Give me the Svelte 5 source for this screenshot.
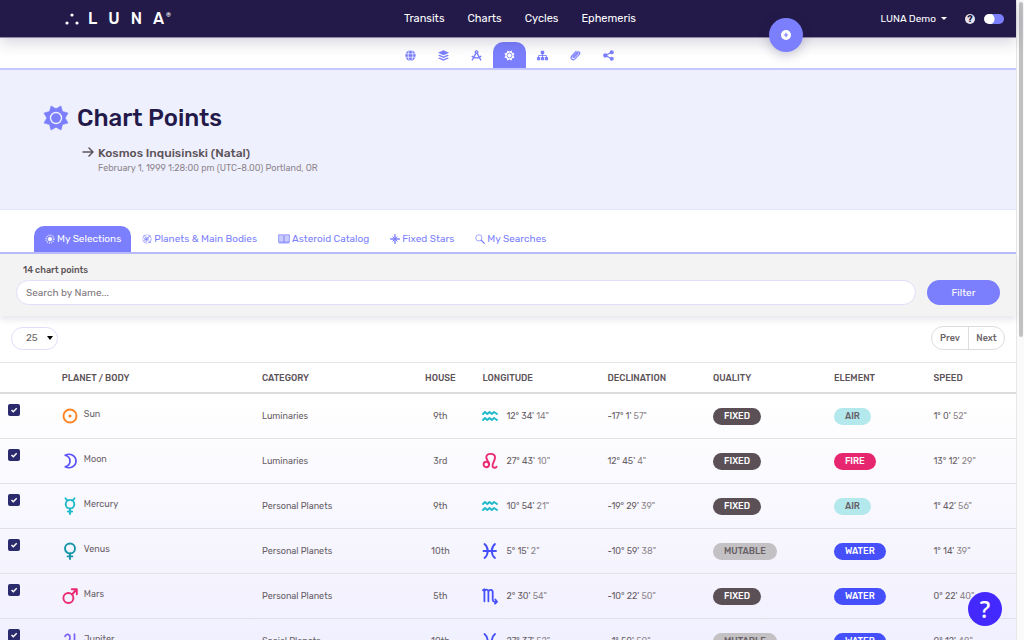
<script>
  const rows = [
    { body: 'Sun', icon: 'sun', color: '#fd8424', category: 'Luminaries', house: '9th', sign: 'aquarius', lon: ["12° 34'", '14"'], dec: ["-17° 1'", '57"'], quality: 'Fixed', element: 'Air', speed: ["1° 0'", '52"'] },
    { body: 'Moon', icon: 'moon', color: '#5a50f8', category: 'Luminaries', house: '3rd', sign: 'leo', lon: ["27° 43'", '10"'], dec: ["12° 45'", '4"'], quality: 'Fixed', element: 'Fire', speed: ["13° 12'", '29"'] },
    { body: 'Mercury', icon: 'mercury', color: '#1fb9c9', category: 'Personal Planets', house: '9th', sign: 'aquarius', lon: ["10° 54'", '21"'], dec: ["-19° 29'", '39"'], quality: 'Fixed', element: 'Air', speed: ["1° 42'", '56"'] },
    { body: 'Venus', icon: 'venus', color: '#1596a8', category: 'Personal Planets', house: '10th', sign: 'pisces', lon: ["5° 15'", '2"'], dec: ["-10° 59'", '38"'], quality: 'Mutable', element: 'Water', speed: ["1° 14'", '39"'] },
    { body: 'Mars', icon: 'mars', color: '#ea2a72', category: 'Personal Planets', house: '5th', sign: 'scorpio', lon: ["2° 30'", '54"'], dec: ["-10° 22'", '50"'], quality: 'Fixed', element: 'Water', speed: ["0° 22'", '40"'] },
    { body: 'Jupiter', icon: 'jupiter', color: '#7d62f8', category: 'Social Planets', house: '10th', sign: 'pisces', lon: ["27° 37'", '52"'], dec: ["-1° 50'", '50"'], quality: 'Mutable', element: 'Water', speed: ["0° 12'", '48"'] }
  ];
  const signColors = { aquarius: '#1fb9c9', leo: '#ea2a72', pisces: '#4550fa', scorpio: '#4550fa' };
  const tools = ['globe', 'layers', 'compass', 'points', 'tree', 'clip', 'share'];
  const toolNames = ['World', 'Layers', 'Draw', 'Chart points', 'Structure', 'Attachments', 'Share'];
  const tabs = [
    { name: 'My Selections', icon: 'rays' },
    { name: 'Planets & Main Bodies', icon: 'orbit' },
    { name: 'Asteroid Catalog', icon: 'book' },
    { name: 'Fixed Stars', icon: 'star' },
    { name: 'My Searches', icon: 'search' }
  ];
  const columns = ['Planet / Body', 'Category', 'House', 'Longitude', 'Declination', 'Quality', 'Element', 'Speed'];
  const sunPoints = (n, outer, inner, c) =>
    Array.from({ length: n * 2 }, (_, i) => {
      const r = i % 2 ? outer : inner;
      const a = (Math.PI * i) / n;
      return `${(c + r * Math.sin(a)).toFixed(2)},${(c - r * Math.cos(a)).toFixed(2)}`;
    }).join(' ');
</script>

{#snippet toolIcon(name)}
  <svg class="tool-icon" viewBox="0 0 16 16" fill="currentColor" aria-hidden="true">
    {#if name === 'globe'}
      <circle cx="8" cy="8" r="7.5" />
      <g fill="none" stroke="#fff" stroke-width="1"><ellipse cx="8" cy="8" rx="3.3" ry="7.5" /><path d="M.5 5.5h15M.5 10.5h15" /></g>
    {:else if name === 'layers'}
      <path d="M8 .5 16 4 8 7.7 0 4z" />
      <path d="m0 8 2.4-1.1L8 9.4l5.6-2.5L16 8l-8 3.7z" />
      <path d="m0 12 2.4-1.1L8 13.4l5.6-2.5L16 12l-8 3.7z" />
    {:else if name === 'compass'}
      <g fill="none" stroke="currentColor" stroke-width="2"><circle cx="8" cy="3" r="1.8" /><path d="M7.2 4.5 1.5 15M8.8 4.5 14.5 15M1 8.5c3.5 4 10.5 4 14 0" /></g>
    {:else if name === 'points'}
      <polygon points={sunPoints(8, 8, 5.8, 8)} />
      <circle cx="8" cy="8" r="3.5" fill="none" stroke="#7b7ffd" stroke-width="1.2" />
    {:else if name === 'tree'}
      <rect x="5.5" y="1" width="5" height="5" rx="1" /><rect x="0" y="10" width="4.6" height="5" rx="1" /><rect x="5.7" y="10" width="4.6" height="5" rx="1" /><rect x="11.4" y="10" width="4.6" height="5" rx="1" />
      <path d="M8 5v6M2.3 10.5V8h11.4v2.5" fill="none" stroke="currentColor" stroke-width="1.3" />
    {:else if name === 'clip'}
      <path d="M11.5 5 6 10.6c-1 1-2.3-.3-1.3-1.3L10.5 3.4c2.2-2 5 .8 3 3L7.2 13c-3.3 3.2-7.6-1-4.5-4.4L9 2" fill="none" stroke="currentColor" stroke-width="1.7" stroke-linecap="round" />
    {:else}
      <path d="M12.5 3.3 3.5 8l9 4.7" fill="none" stroke="currentColor" stroke-width="1.8" />
      <circle cx="12.7" cy="3.3" r="2.9" /><circle cx="3.3" cy="8" r="3.1" /><circle cx="12.7" cy="12.7" r="2.9" />
    {/if}
  </svg>
{/snippet}

{#snippet tabIcon(name)}
  <svg class="tab-icon" class:wide={name === 'book'} viewBox={name === 'book' ? '0 0 20 16' : '0 0 16 16'} fill="none" stroke="currentColor" aria-hidden="true">
    {#if name === 'rays'}
      <circle cx="8" cy="8" r="3" fill="currentColor" />
      <circle cx="8" cy="8" r="6.2" stroke-width="2.5" stroke-dasharray="1.6 1.645" opacity=".75" />
    {:else if name === 'orbit'}
      <circle cx="8" cy="8" r="6.8" stroke-width="1.3" stroke-dasharray="9 1.7" opacity=".8" />
      <circle cx="7" cy="8.5" r="3.3" stroke-width="1.2" opacity=".8" />
      <circle cx="7" cy="8.5" r="1.5" fill="currentColor" /><path d="m8 7.5 5-5M3 2l2 2M11 12l3 2" stroke-width="1.5" />
    {:else if name === 'book'}
      <path d="M1 1h7.5L10 2l1.5-1H19v12h-7.5L10 14l-1.5-1H1z" fill="currentColor" fill-opacity=".4" stroke-width="1.2" />
      <path d="M10 2v12M1 14.5h8l1 .8 1-.8h8" stroke-width="1.6" />
    {:else if name === 'star'}
      <path d="M8 1v14M1 8h14" stroke-width="2.2" stroke-linecap="round" /><path d="m4 4 8 8M12 4l-8 8" stroke-width="1.6" />
    {:else}
      <circle cx="6.2" cy="6.2" r="5" stroke-width="1.1" /><path d="m10 10 5 5" stroke-width="2" stroke-linecap="round" />
    {/if}
  </svg>
{/snippet}

{#snippet glyph(name, color)}
  <svg class="glyph" viewBox="0 0 16 18" fill="none" stroke={color} stroke-width="1.9" stroke-linecap="round" stroke-linejoin="round" aria-hidden="true">
    {#if name === 'sun'}
      <circle cx="8" cy="9" r="6.5" /><circle cx="8" cy="9" r="1.6" fill={color} stroke="none" />
    {:else if name === 'moon'}
      <path d="M3.2 3.2C8.5.6 14 4 14 9s-5.5 8.4-10.8 5.8C9.6 13 9.6 5 3.2 3.2Z" stroke-width="1.7" />
    {:else if name === 'mercury'}
      <circle cx="8" cy="7.2" r="4.3" /><path d="M3.5 1.3c.4 1.3 1.3 1.9 2.6 2.2M12.5 1.3c-.4 1.3-1.3 1.9-2.6 2.2M8 11.7v5.3M5.9 14.5h4.2" />
    {:else if name === 'venus'}
      <circle cx="8" cy="6.5" r="5" /><path d="M8 11.5V17M5.6 14.4h4.8" />
    {:else if name === 'mars'}
      <circle cx="6.4" cy="11" r="5" /><path d="m10 7.5 4.5-5M9.8 2.2h5v5" />
    {:else if name === 'jupiter'}
      <path d="M3 4.5C4 1.5 8 1.6 8 5.5c0 3-2.5 5.5-5 6.5h11M12.5 2v14" stroke-width="1.7" />
    {:else if name === 'aquarius'}
      <path d="m1 7 2-2 2.3 2 2.2-2 2.3 2L12 5l3 2M1 13l2-2 2.3 2 2.2-2 2.3 2 2.2-2 3 2" />
    {:else if name === 'leo'}
      <path d="M7 12.5C7.5 9.5 4 8 4.3 5 4.7 1 13 .5 13 5.5c0 3.5-3 6-2.5 8.7.4 2.1 2.8 2 4 .6" /><circle cx="4.3" cy="12.5" r="2.7" />
    {:else if name === 'pisces'}
      <path d="M2.5 2c4.3 3.5 4.3 10.5 0 14M13 2c-4.3 3.5-4.3 10.5 0 14M1.5 9H14" />
    {:else}
      <path d="m1 3.3 1.4-1v12M2.4 4c1-2 4-1.8 4 .8v9.5M6.4 4.5c1-2.4 4.3-2.2 4.3.5v7.5c0 2 1.5 2.8 4 2.3M13.3 12.5l1.7 2.3-2 1.9" stroke-width="1.8" />
    {/if}
  </svg>
{/snippet}

{#snippet degrees(value)}
  <span class="degrees">{value[0]} <span>{value[1]}</span></span>
{/snippet}

<div class="shell">
  <div class="page">
    <header class="topbar">
      <a class="logo" href="#home" aria-label="LUNA">
        <svg viewBox="0 0 14 12" fill="#fff" aria-hidden="true"><circle cx="7" cy="2" r="1.6" /><circle cx="2" cy="10" r="1.6" /><circle cx="12" cy="10" r="1.6" /></svg>
        <span class="word"><span>L</span><span>U</span><span>N</span><span>A</span></span><sup>®</sup>
      </a>
      <nav class="links" aria-label="Main">
        <a href="#transits">Transits</a>
        <a href="#charts">Charts</a>
        <a href="#cycles">Cycles</a>
        <a href="#ephemeris">Ephemeris</a>
      </nav>
      <div class="account">
        <button class="user">LUNA Demo <svg viewBox="0 0 6 3" fill="#fff" aria-hidden="true"><path d="M0 0h6L3 3z" /></svg></button>
        <button class="info" aria-label="Help">?</button>
        <input class="switch" type="checkbox" aria-label="Theme" />
      </div>
      <button class="add" aria-label="Add">
        <svg viewBox="0 0 10 10" aria-hidden="true"><circle cx="5" cy="5" r="5" fill="#fff" /><path d="M5 2.8v4.4M2.8 5h4.4" stroke="#7b7ffd" stroke-width="1.2" /></svg>
      </button>
    </header>

    <nav class="tools" aria-label="Chart tools">
      {#each tools as tool, i}
        <a href={'#' + tool} class:active={tool === 'points'} aria-label={toolNames[i]}>{@render toolIcon(tool)}</a>
      {/each}
    </nav>

    <section class="hero">
      <div class="title">
        <svg viewBox="0 0 26 26" aria-hidden="true"><polygon points={sunPoints(8, 13, 9.2, 13)} fill="#7b7ffd" stroke="#7b7ffd" stroke-width=".6" stroke-linejoin="round" /><circle cx="13" cy="13" r="5.5" fill="none" stroke="#eff0fe" stroke-width="1.4" /></svg>
        <h1>Chart Points</h1>
      </div>
      <div class="subject">
        <svg viewBox="0 0 12 10" fill="none" stroke="#5c5359" stroke-width="1.5" stroke-linecap="round" stroke-linejoin="round" aria-hidden="true"><path d="M1 5h10M7 1l4 4-4 4" /></svg>
        <div>
          <h2>Kosmos Inquisinski (Natal)</h2>
          <p>February 1, 1999 1:28:00 pm (UTC-8.00) Portland, OR</p>
        </div>
      </div>
    </section>

    <nav class="tabs" aria-label="Point lists">
      {#each tabs as tab, i}
        <a href={'#tab' + i} class:active={i === 0}>{@render tabIcon(tab.icon)}{tab.name}</a>
      {/each}
    </nav>

    <form class="filter">
      <label for="search">14 chart points</label>
      <div class="filter-row">
        <input id="search" type="text" placeholder="Search by Name..." />
        <button type="button">Filter</button>
      </div>
    </form>

    <div class="results">
      <div class="paging">
        <span class="size">
          <select aria-label="Rows per page"><option>25</option><option>50</option></select>
          <svg viewBox="0 0 6 4" aria-hidden="true"><path d="M0 0h6L3 4z" /></svg>
        </span>
        <div class="pager"><button>Prev</button><button>Next</button></div>
      </div>

      <table>
        <colgroup>
          <col class="c-check" /><col class="c-body" /><col class="c-category" /><col class="c-house" /><col class="c-lon" /><col class="c-dec" /><col class="c-quality" /><col class="c-element" /><col class="c-speed" />
        </colgroup>
        <thead>
          <tr>
            <td></td>
            {#each columns as column}<th class:house={column === 'House'} scope="col">{column}</th>{/each}
          </tr>
        </thead>
        <tbody>
          {#each rows as row}
            <tr>
              <td class="pick">
                <label>
                  <input type="checkbox" checked aria-label={row.body} />
                  <svg viewBox="0 0 12 12" fill="none" stroke="#fff" stroke-width="1.5" aria-hidden="true"><path d="m3.5 6 1.8 1.7L8.7 4.2" /></svg>
                </label>
              </td>
              <td><div class="body">{@render glyph(row.icon, row.color)}<span>{row.body}</span></div></td>
              <td>{row.category}</td>
              <td class="house">{row.house}</td>
              <td><div class="lon">{@render glyph(row.sign, signColors[row.sign])}{@render degrees(row.lon)}</div></td>
              <td>{@render degrees(row.dec)}</td>
              <td><span class="badge {row.quality.toLowerCase()}">{row.quality}</span></td>
              <td><span class="badge {row.element.toLowerCase()}">{row.element}</span></td>
              <td>{@render degrees(row.speed)}</td>
            </tr>
          {/each}
        </tbody>
      </table>
    </div>
  </div>
  <div class="track"><div class="thumb"></div></div>
  <button class="support" aria-label="Support">?</button>
</div>

<style>
  :global(body) { margin: 0; }
  .shell {
    position: relative;
    display: flex;
    height: 100vh;
    overflow: hidden;
    background: #fff;
    color: #5c5359;
    font: 9px/12px Rubik, Roboto, "Liberation Sans", sans-serif;
  }
  .shell * { box-sizing: border-box; }
  button, input, select { font: inherit; color: inherit; margin: 0; padding: 0; border: 0; background: none; }
  button { cursor: pointer; }
  a { color: inherit; text-decoration: none; }
  svg { display: block; flex: none; }
  .page { flex: 1; min-width: 0; }
  .track { width: 8px; padding: 2px 1px 2px 2px; background: #fafafa; border-left: 1px solid #e8e8e8; }
  .thumb { height: 335px; border-radius: 4px; background: #c1c1c1; }

  .topbar {
    position: relative;
    z-index: 2;
    display: grid;
    grid-template-columns: 1fr auto 1fr;
    align-items: center;
    height: 38px;
    padding: 0 12px 0 36px;
    background: #231a4a;
    border-bottom: 1px solid #8e89a8;
    box-shadow: 0 4px 16px rgba(35, 26, 74, .2);
    color: #fff;
  }
  .logo { display: flex; align-items: center; margin-left: 29px; font-size: 16px; line-height: 16px; font-weight: 500; }
  .logo > svg { width: 14px; height: 12px; margin-right: 9px; }
  .word { display: flex; gap: 11px; }
  .logo sup { align-self: flex-start; margin-left: 2px; font-size: 6px; line-height: 8px; }
  .links { display: flex; gap: 23px; font-size: 11px; line-height: 16px; }
  .account { display: flex; justify-content: flex-end; align-items: center; }
  .user { display: flex; align-items: center; gap: 5px; font-size: 10px; line-height: 16px; }
  .user svg { width: 6px; height: 3px; }
  .info { width: 10px; height: 10px; margin-left: 18px; border-radius: 50%; background: #e4e2ec; color: #231a4a; font-size: 9px; line-height: 10px; font-weight: 700; }
  .switch { appearance: none; width: 20px; height: 10px; margin-left: 9px; border-radius: 5px; background: radial-gradient(circle at 5px 5px, #fff 5px, #7b7ffd 6px); }
  .add { position: absolute; right: 213px; top: 18px; display: grid; place-items: center; width: 34px; height: 34px; border-radius: 50%; background: #7b7ffd; box-shadow: 0 3px 12px rgba(35, 26, 74, .25); }
  .add svg { width: 10px; height: 10px; }

  .tools { display: flex; justify-content: center; align-items: flex-end; height: 32px; padding-left: 2px; border-bottom: 2px solid #c5c8fd; color: #7b7ffd; }
  .tools a { display: grid; place-items: center; width: 33px; height: 26px; border-radius: 10px 10px 0 0; }
  .tools .active { background: #7b7ffd; color: #fff; }
  .tool-icon { width: 11px; height: 11px; }

  .hero { padding: 31px 43px 34px; background: #eff0fe; border-bottom: 1px solid #e4e5fa; }
  .title { display: flex; align-items: center; gap: 8px; }
  .title svg { width: 26px; height: 26px; }
  h1 { margin: 0; color: #231a4a; font-size: 24px; line-height: 34px; font-weight: 500; }
  .subject { display: flex; gap: 4px; margin: 10px 0 0 39px; }
  .subject > svg { width: 12px; height: 10px; margin-top: 2px; }
  h2 { margin: 0; font-size: 12px; line-height: 16px; font-weight: 500; }
  p { margin: 0; color: #8d868c; line-height: 14px; }

  .tabs { display: flex; align-items: flex-end; height: 44px; padding: 0 34px; border-bottom: 2px solid #b9bcfc; color: #7b7ffd; font-size: 10px; }
  .tabs a { display: flex; align-items: center; gap: 2px; height: 26px; padding: 0 10px 0 11px; border-radius: 10px 10px 0 0; }
  .tabs .active { background: #7b7ffd; color: #fff; }
  .tab-icon { width: 10px; height: 10px; }
  .tab-icon.wide { width: 12px; }

  .filter { position: relative; padding: 10px 16px 11px; background: #f3f3f3; box-shadow: 0 4px 6px rgba(35, 26, 74, .1); }
  .filter label { display: block; margin-left: 7px; font-weight: 500; }
  .filter-row { display: flex; gap: 11px; margin-top: 4px; }
  .filter-row input { flex: 1; height: 25px; padding: 0 9px; border: 1px solid #dfdffa; border-radius: 13px; background: #fff; font-size: 10px; }
  .filter-row input::placeholder { color: #7d777b; opacity: 1; }
  .filter-row button { width: 73px; border-radius: 13px; background: #7b7ffd; color: #fff; font-size: 10px; }

  .results { background: linear-gradient(#fff 0, #fff 80px, #f1f0fe 320px); }
  .paging { display: flex; justify-content: space-between; padding: 10px 11px 12px; }
  .size { display: grid; align-items: center; }
  .size select, .size svg { grid-area: 1 / 1; }
  .size select { appearance: none; width: 47px; height: 23px; padding: 0 14px; border: 1px solid #dfdffa; border-radius: 12px; background: #fff; color: #6d666b; font-size: 10px; }
  .size svg { justify-self: end; width: 6px; height: 4px; margin-right: 5px; pointer-events: none; fill: #000; }
  .pager { display: flex; height: 24px; border: 1px solid #ddd; border-radius: 12px; background: #fff; }
  .pager button { width: 36px; color: #6d666b; font-weight: 500; }
  .pager button + button { border-left: 1px solid #ddd; }

  table { width: 100%; table-layout: fixed; border-collapse: separate; border-spacing: 0; }
  .c-check { width: 5.3%; } .c-body { width: 19.7%; } .c-category { width: 15%; } .c-house { width: 6.7%; }
  .c-lon { width: 12.3%; } .c-dec { width: 10.4%; } .c-quality { width: 11.9%; } .c-element { width: 9.8%; }
  th, td { padding: 0 0 0 8px; text-align: left; vertical-align: middle; border-bottom: 1px solid #e2e1e8; white-space: nowrap; }
  tbody td { height: 45px; color: #686066; }
  thead th, thead td { height: 32px; border-top: 1px solid #e4e4e4; border-bottom: 2px solid #dcdcdc; font-weight: 500; text-transform: uppercase; }
  th.house, td.house { padding: 0; text-align: center; }
  td.pick { vertical-align: top; padding-top: 10px; }
  .pick label { display: grid; width: 12px; height: 12px; }
  .pick input, .pick svg { grid-area: 1 / 1; width: 12px; height: 12px; }
  .pick input { appearance: none; border-radius: 2px; background: #2a2a6c; }
  .body, .lon { display: flex; align-items: center; gap: 6px; }
  .lon { gap: 8px; }
  .body span { padding-bottom: 4px; }
  .glyph { width: 16px; height: 18px; }
  .degrees span { color: #8d868c; }
  .badge { display: inline-block; padding: 0 11px; border-radius: 9px; line-height: 17px; font-weight: 500; text-transform: uppercase; vertical-align: middle; }
  .fixed { background: #5a5056; color: #fff; }
  .mutable { background: #c3c1c3; }
  .air { background: #b3e8ec; }
  .fire { background: #e6266f; color: #fff; }
  .water { background: #4550fa; color: #fff; }

  .support { position: absolute; z-index: 4; right: 22px; bottom: 14px; width: 34px; height: 34px; border-radius: 50%; background: #4429ff; color: #fff; font: 600 23px/34px "Open Sans", sans-serif; }
</style>
